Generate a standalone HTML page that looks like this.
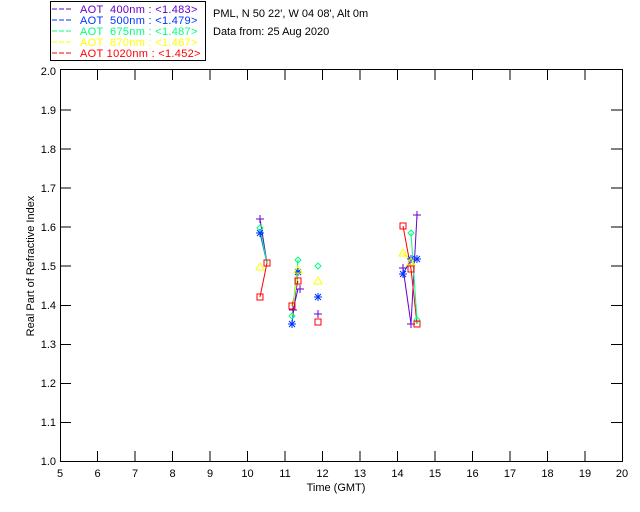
<!DOCTYPE html><html><head><style>body{margin:0;background:#fff}svg{display:block}text{font-family:"Liberation Sans",sans-serif;font-size:11px}</style></head><body>
<svg width="640" height="512" xmlns="http://www.w3.org/2000/svg">
<rect width="640" height="512" fill="#fff"/>
<rect x="50.5" y="1.5" width="155" height="59" fill="none" stroke="#000"/>
<g font-size="11" letter-spacing="0.3">
<line x1="52" y1="9" x2="72" y2="9" stroke="#6600cc" stroke-dasharray="5,2"/><text x="80" y="13" fill="#6600cc" xml:space="preserve">AOT  400nm : &lt;1.483&gt;</text>
<line x1="52" y1="20" x2="72" y2="20" stroke="#0033ff" stroke-dasharray="5,2"/><text x="80" y="24" fill="#0033ff" xml:space="preserve">AOT  500nm : &lt;1.479&gt;</text>
<line x1="52" y1="31" x2="72" y2="31" stroke="#00ff80" stroke-dasharray="5,2"/><text x="80" y="35" fill="#00ff80" xml:space="preserve">AOT  675nm : &lt;1.487&gt;</text>
<line x1="52" y1="42" x2="72" y2="42" stroke="#ffff00" stroke-dasharray="5,2"/><text x="80" y="46" fill="#ffff00" xml:space="preserve">AOT  870nm : &lt;1.467&gt;</text>
<line x1="52" y1="53" x2="72" y2="53" stroke="#ff0000" stroke-dasharray="5,2"/><text x="80" y="57" fill="#ff0000" xml:space="preserve">AOT 1020nm : &lt;1.452&gt;</text>
</g>
<text x="213" y="17">PML, N 50 22', W 04 08', Alt 0m</text>
<text x="213" y="35">Data from: 25 Aug 2020</text>
<rect x="60.5" y="69.5" width="562" height="392" fill="none" stroke="#000"/>
<g stroke="#000">
<line x1="97.5" y1="461" x2="97.5" y2="451"/><line x1="135" y1="461" x2="135" y2="451"/><line x1="172.5" y1="461" x2="172.5" y2="451"/><line x1="210" y1="461" x2="210" y2="451"/><line x1="247.5" y1="461" x2="247.5" y2="451"/><line x1="285" y1="461" x2="285" y2="451"/><line x1="322.5" y1="461" x2="322.5" y2="451"/><line x1="360" y1="461" x2="360" y2="451"/><line x1="397.5" y1="461" x2="397.5" y2="451"/><line x1="435" y1="461" x2="435" y2="451"/><line x1="472.5" y1="461" x2="472.5" y2="451"/><line x1="510" y1="461" x2="510" y2="451"/><line x1="547.5" y1="461" x2="547.5" y2="451"/><line x1="585" y1="461" x2="585" y2="451"/>
<line x1="97.5" y1="70" x2="97.5" y2="80"/><line x1="135" y1="70" x2="135" y2="80"/><line x1="172.5" y1="70" x2="172.5" y2="80"/><line x1="210" y1="70" x2="210" y2="80"/><line x1="247.5" y1="70" x2="247.5" y2="80"/><line x1="285" y1="70" x2="285" y2="80"/><line x1="322.5" y1="70" x2="322.5" y2="80"/><line x1="360" y1="70" x2="360" y2="80"/><line x1="397.5" y1="70" x2="397.5" y2="80"/><line x1="435" y1="70" x2="435" y2="80"/><line x1="472.5" y1="70" x2="472.5" y2="80"/><line x1="510" y1="70" x2="510" y2="80"/><line x1="547.5" y1="70" x2="547.5" y2="80"/><line x1="585" y1="70" x2="585" y2="80"/>
<line x1="60" y1="422.5" x2="71" y2="422.5"/><line x1="60" y1="383.5" x2="71" y2="383.5"/><line x1="60" y1="344.5" x2="71" y2="344.5"/><line x1="60" y1="305.5" x2="71" y2="305.5"/><line x1="60" y1="266" x2="71" y2="266"/><line x1="60" y1="227" x2="71" y2="227"/><line x1="60" y1="188" x2="71" y2="188"/><line x1="60" y1="149" x2="71" y2="149"/><line x1="60" y1="110" x2="71" y2="110"/>
<line x1="622" y1="422.5" x2="611" y2="422.5"/><line x1="622" y1="383.5" x2="611" y2="383.5"/><line x1="622" y1="344.5" x2="611" y2="344.5"/><line x1="622" y1="305.5" x2="611" y2="305.5"/><line x1="622" y1="266" x2="611" y2="266"/><line x1="622" y1="227" x2="611" y2="227"/><line x1="622" y1="188" x2="611" y2="188"/><line x1="622" y1="149" x2="611" y2="149"/><line x1="622" y1="110" x2="611" y2="110"/>
</g>
<g text-anchor="middle">
<text x="60" y="477">5</text><text x="97.5" y="477">6</text><text x="135" y="477">7</text><text x="172.5" y="477">8</text><text x="210" y="477">9</text><text x="247.5" y="477">10</text><text x="285" y="477">11</text><text x="322.5" y="477">12</text><text x="360" y="477">13</text><text x="397.5" y="477">14</text><text x="435" y="477">15</text><text x="472.5" y="477">16</text><text x="510" y="477">17</text><text x="547.5" y="477">18</text><text x="585" y="477">19</text><text x="622" y="477">20</text>
<text x="336" y="491">Time (GMT)</text>
</g>
<g text-anchor="end">
<text x="56" y="465">1.0</text><text x="56" y="426">1.1</text><text x="56" y="387">1.2</text><text x="56" y="348">1.3</text><text x="56" y="309">1.4</text><text x="56" y="270">1.5</text><text x="56" y="231">1.6</text><text x="56" y="192">1.7</text><text x="56" y="153">1.8</text><text x="56" y="114">1.9</text><text x="56" y="75">2.0</text>
</g>
<text transform="translate(34,266) rotate(-90)" text-anchor="middle">Real Part of Refractive Index</text>
<g fill="none" stroke-width="1">
<polyline points="260,219 267,263" stroke="#6600cc"/>
<polyline points="260,233 267,263" stroke="#0033ff"/>
<polyline points="260,229 267,263" stroke="#00ff80"/>
<polyline points="260,297 267,263" stroke="#ff0000"/>
<polyline points="292,306 298,281" stroke="#ff0000"/>
<polyline points="292,324 298,272" stroke="#0033ff"/>
<polyline points="292,316 298,260" stroke="#00ff80"/>
<polyline points="293,310 298,289" stroke="#6600cc"/>
<polyline points="292,316 298,270" stroke="#ffff00"/>
<polyline points="403,268 411,324 417,215" stroke="#6600cc"/>
<polyline points="403,226 411,269 417,324" stroke="#ff0000"/>
<polyline points="411,233 417,320" stroke="#00ff80"/>
<polyline points="403,274 411,259 417,259" stroke="#0033ff"/>
<polyline points="403,253 411,262" stroke="#ffff00"/>
</g>
<g fill="none">
<path d="M256 219h8M260 215v8M289 310h8M293 306v8M296 289h8M300 285v8M314 314h8M318 310v8M399 268h8M403 264v8M407 324h8M411 320v8M413 215h8M417 211v8" stroke="#6600cc"/>
<path d="M256 233h8M260 229v8M257 230l6 6M263 230l-6 6M288 324h8M292 320v8M289 321l6 6M295 321l-6 6M294 272h8M298 268v8M295 269l6 6M301 269l-6 6M314 297h8M318 293v8M315 294l6 6M321 294l-6 6M399 274h8M403 270v8M400 271l6 6M406 271l-6 6M407 259h8M411 255v8M408 256l6 6M414 256l-6 6M413 259h8M417 255v8M414 256l6 6M420 256l-6 6" stroke="#0033ff"/>
<path d="M260 225l3 3-3 3-3-3zM292 313l3 3-3 3-3-3zM298 257l3 3-3 3-3-3zM318 263l3 3-3 3-3-3zM411 230l3 3-3 3-3-3zM417 317l3 3-3 3-3-3z" stroke="#00ff80"/>
<path d="M260 263l4 7h-8zM298 266l4 7h-8zM318 277l4 7h-8zM403 249l4 7h-8zM411 258l4 7h-8z" stroke="#ffff00"/>
<path d="M257 294h6v6h-6zM264 260h6v6h-6zM289 303h6v6h-6zM295 278h6v6h-6zM315 319h6v6h-6zM400 223h6v6h-6zM408 266h6v6h-6zM414 321h6v6h-6z" stroke="#ff0000"/>
</g>
</svg>
</body></html>
